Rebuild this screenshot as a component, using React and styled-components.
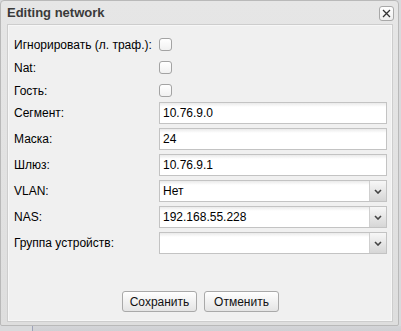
import React from 'react';
import styled, { createGlobalStyle } from 'styled-components';

const GlobalStyle = createGlobalStyle`
	html, body {
		margin: 0;
		padding: 0;
		background: #d9dadc;
		font-family: 'Liberation Sans', Arial, sans-serif;
	}
`;

const Page = styled.div`
	width: 401px;
	height: 331px;
	overflow: hidden;
	display: flex;
	flex-direction: column;
`;

const Window = styled.div`
	width: 399px;
	height: 326px;
	box-sizing: border-box;
	display: flex;
	flex-direction: column;
	background: linear-gradient(#e6e6e6, #dedede);
	border: 1px solid #b9b9b9;
	border-radius: 4px 4px 2px 2px;
	padding: 0 5px 3px 6px;
`;

const Header = styled.div`
	height: 23px;
	display: flex;
	align-items: center;
	justify-content: space-between;
	h1 {
		margin: 0;
		font-size: 13px;
		font-weight: bold;
		color: #3a3a3a;
	}
`;

const CloseButton = styled.button`
	width: 15px;
	height: 15px;
	padding: 0;
	margin-right: -1px;
	margin-top: 2px;
	display: flex;
	align-items: center;
	justify-content: center;
	background: linear-gradient(#ffffff, #eeeeee);
	border: 1px solid #a8a8a8;
	border-radius: 3px;
`;

const Body = styled.div`
	flex: 1;
	display: flex;
	flex-direction: column;
	background: #f0f0f0;
	border: 1px solid #cdcdcd;
	box-shadow: inset 0 0 0 1px #f7f7f7;
	padding: 8px 5px 9px 6px;
`;

const Form = styled.div`
	display: flex;
	flex-direction: column;
`;

const Row = styled.div`
	display: flex;
	align-items: center;
	height: ${(p) => (p.$check ? '23px' : '22px')};
	margin-bottom: ${(p) => (p.$check ? '0' : '4px')};
`;

const Label = styled.label`
	width: 145px;
	flex-shrink: 0;
	font-size: 12px;
	color: #000;
`;

const Checkbox = styled.span`
	width: 11px;
	height: 11px;
	border: 1px solid #a3a3a3;
	border-radius: 3px;
	background: linear-gradient(#ffffff, #f1f1f1);
`;

const Field = styled.div`
	flex: 1;
	height: 22px;
	box-sizing: border-box;
	display: flex;
	border: 1px solid #c3c3c3;
	background: linear-gradient(#eaeaea, #ffffff 4px);
`;

const Value = styled.span`
	flex: 1;
	padding-left: 3px;
	font-size: 12px;
	line-height: 20px;
	color: #000;
`;

const Trigger = styled.span`
	width: 16px;
	border-left: 1px solid #cfcfcf;
	background: linear-gradient(#f7f7f7, #d6d6d6);
	display: flex;
	align-items: center;
	justify-content: center;
`;

const Footer = styled.div`
	margin-top: auto;
	display: flex;
	justify-content: center;
	gap: 7px;
`;

const Button = styled.button`
	width: 75px;
	height: 21px;
	padding: 0;
	font-family: 'Liberation Sans', Arial, sans-serif;
	font-size: 12px;
	color: #111;
	background: linear-gradient(#ffffff, #e4e4e4);
	border: 1px solid #a9a9a9;
	border-radius: 3px;
`;

const Behind = styled.div`
	flex: 1;
	margin-left: 32px;
	border-left: 1px solid #9ea2b8;
	background: linear-gradient(#d4d5d8, #cfd0d4);
`;

const Chevron = () => (
	<svg width='8' height='5' viewBox='0 0 8 5'>
		<path d='M1 1l3 3 3-3' fill='none' stroke='#444' strokeWidth='1.6' />
	</svg>
);

const Cross = () => (
	<svg width='9' height='9' viewBox='0 0 9 9'>
		<path d='M1 1l7 7M8 1l-7 7' stroke='#333' strokeWidth='1.3' />
	</svg>
);

const checks = ['Игнорировать (л. траф.):', 'Nat:', 'Гость:'];

const fields = [
	{ label: 'Сегмент:', value: '10.76.9.0' },
	{ label: 'Маска:', value: '24' },
	{ label: 'Шлюз:', value: '10.76.9.1' },
	{ label: 'VLAN:', value: 'Нет', combo: true },
	{ label: 'NAS:', value: '192.168.55.228', combo: true },
	{ label: 'Группа устройств:', value: '', combo: true },
];

const App = () => (
	<Page>
		<GlobalStyle />
		<Window>
			<Header>
				<h1>Editing network</h1>
				<CloseButton>
					<Cross />
				</CloseButton>
			</Header>
			<Body>
				<Form>
					{checks.map((c) => (
						<Row $check key={c}>
							<Label>{c}</Label>
							<Checkbox />
						</Row>
					))}
					{fields.map((f) => (
						<Row key={f.label}>
							<Label>{f.label}</Label>
							<Field>
								<Value>{f.value}</Value>
								{f.combo && (
									<Trigger>
										<Chevron />
									</Trigger>
								)}
							</Field>
						</Row>
					))}
				</Form>
				<Footer>
					<Button>Сохранить</Button>
					<Button>Отменить</Button>
				</Footer>
			</Body>
		</Window>
		<Behind />
	</Page>
);

export default App;
